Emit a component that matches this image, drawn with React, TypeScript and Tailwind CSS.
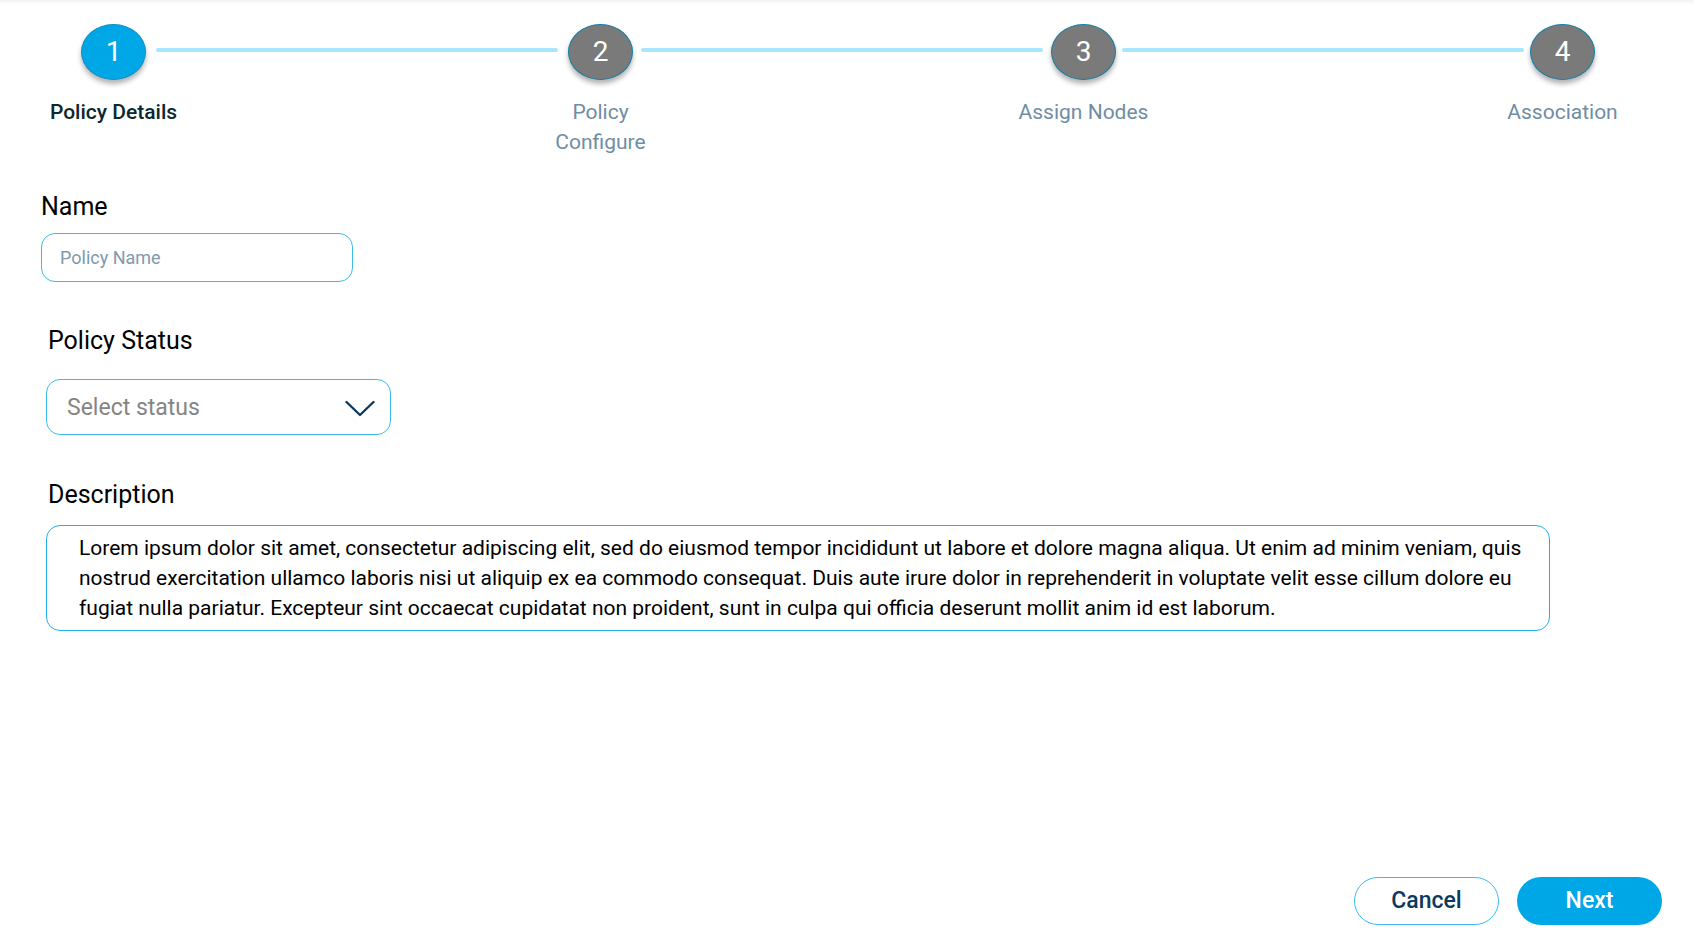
import { Fragment } from "react";
import clsx from "clsx";

const steps = [
  { label: "Policy Details", connector: "mx-[10px]" },
  { label: "Policy Configure", connector: "mx-2" },
  { label: "Assign Nodes", connector: "mx-[6px]" },
  { label: "Association", connector: "" },
];

const description =
  "Lorem ipsum dolor sit amet, consectetur adipiscing elit, sed do eiusmod tempor incididunt ut labore et dolore magna aliqua. Ut enim ad minim veniam, quis nostrud exercitation ullamco laboris nisi ut aliquip ex ea commodo consequat. Duis aute irure dolor in reprehenderit in voluptate velit esse cillum dolore eu fugiat nulla pariatur. Excepteur sint occaecat cupidatat non proident, sunt in culpa qui officia deserunt mollit anim id est laborum.";

function Stepper({ current }: { current: number }) {
  return (
    <ol className="flex items-start pt-5 pr-[99px] pl-[81px]">
      {steps.map((step, i) => {
        const active = i === current;
        return (
          <Fragment key={step.label}>
            <li
              aria-current={active ? "step" : undefined}
              className="flex w-[65px] shrink-0 flex-col items-center gap-[17px]"
            >
              <span
                className={clsx(
                  "flex h-14 w-full items-center justify-center rounded-[50%] border text-[28px] leading-8 text-white shadow-[0_4px_5px_rgba(0,0,0,0.3)]",
                  active ? "border-[#0f8fc4] bg-[#00a7e7]" : "border-[#137fa6] bg-[#7a7a7a]",
                )}
              >
                {i + 1}
              </span>
              <span
                className={clsx(
                  "text-center text-[21px] leading-[30px]",
                  active ? "font-medium text-[#0b2730]" : "text-[#6f8da3]",
                  i !== 1 && "whitespace-nowrap",
                )}
              >
                {step.label}
              </span>
            </li>
            {i < steps.length - 1 && (
              <li
                aria-hidden="true"
                className={clsx("mt-6 h-1 flex-1 rounded-full bg-[#a6e6ff]", step.connector)}
              />
            )}
          </Fragment>
        );
      })}
    </ol>
  );
}

export default function App() {
  return (
    <main className="flex min-h-screen flex-col bg-white font-[Roboto,sans-serif] text-black">
      <div className="h-1 shrink-0 bg-linear-to-b from-[#f2f2f2] to-white" />
      <Stepper current={0} />
      <form className="flex flex-1 flex-col" onSubmit={(e) => e.preventDefault()}>
        <div className="flex flex-col items-start gap-[11px] pt-[35px] pl-[41px]">
          <label htmlFor="name" className="text-[25px] leading-[30px]">
            Name
          </label>
          <input
            id="name"
            type="text"
            placeholder="Policy Name"
            className="h-[49px] w-[312px] rounded-[14px] border border-[#3dbcec] px-[18px] text-[18px] outline-none placeholder:text-[#8099ad]"
          />
        </div>
        <div className="flex flex-col items-start gap-[23px] pt-11 pl-[46px]">
          <label htmlFor="status" className="pl-0.5 text-[25px] leading-[30px]">
            Policy Status
          </label>
          <div className="relative w-[345px]">
            <select
              id="status"
              defaultValue=""
              className="h-14 w-full appearance-none rounded-[14px] border border-[#3dbcec] bg-white px-5 pt-0.5 text-[23px] text-[#858585] outline-none"
            >
              <option value="">Select status</option>
              <option value="active">Active</option>
              <option value="inactive">Inactive</option>
            </select>
            <svg
              aria-hidden="true"
              viewBox="0 0 30 18"
              className="pointer-events-none absolute top-[21px] right-4 h-[18px] w-[30px]"
            >
              <path
                d="M1.5 2 L15 15 L28.5 2"
                fill="none"
                stroke="#0b3a5e"
                strokeWidth="2.4"
                strokeLinecap="round"
                strokeLinejoin="round"
              />
            </svg>
          </div>
        </div>
        <div className="flex flex-col items-start gap-[15px] pt-[45px] pr-36 pl-[46px]">
          <label htmlFor="description" className="pl-0.5 text-[25px] leading-[30px]">
            Description
          </label>
          <textarea
            id="description"
            defaultValue={description}
            rows={3}
            className="w-full resize-none overflow-hidden rounded-[14px] border border-[#22b0e6] py-[7px] pr-2 pl-8 text-[21px] leading-[30px] outline-none"
          />
        </div>
        <div className="mt-auto flex justify-end gap-[18px] pt-8 pr-8 pb-[18px]">
          <button
            type="button"
            className="h-12 w-[145px] rounded-full border border-[#3dbcec] text-[23px] font-medium text-[#0b3a5e]"
          >
            Cancel
          </button>
          <button
            type="submit"
            className="h-12 w-[145px] rounded-full bg-[#00a7e7] text-[23px] font-medium text-white"
          >
            Next
          </button>
        </div>
      </form>
    </main>
  );
}
